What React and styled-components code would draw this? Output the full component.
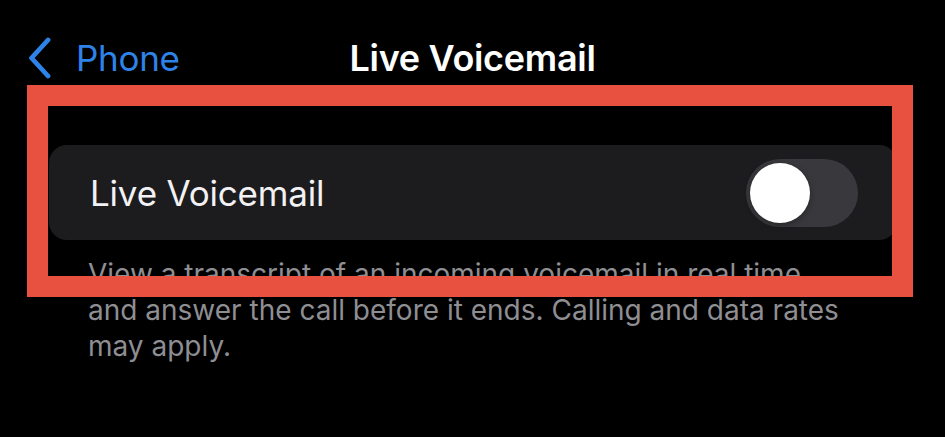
import React from "react";
import styled, { createGlobalStyle } from "styled-components";

const Global = createGlobalStyle`
  html, body { margin: 0; padding: 0; background: #000; }
  body { font-family: Inter, "Noto Sans", "Liberation Sans", sans-serif; -webkit-font-smoothing: antialiased; }
`;

const Screen = styled.div`
  position: relative;
  width: 945px;
  height: 437px;
  background: #000;
  overflow: hidden;
`;

const NavBar = styled.header`
  display: grid;
  grid-template-columns: 1fr auto 1fr;
  align-items: center;
  height: 116px;
  padding: 0 28px;
  box-sizing: border-box;
`;

const BackButton = styled.div`
  display: flex;
  align-items: center;
  gap: 24px;
  color: #2e83e8;
  font-size: 35px;
  font-weight: 400;
  letter-spacing: -0.3px;
`;

const Title = styled.h1`
  margin: 0;
  color: #fff;
  font-size: 36px;
  font-weight: 600;
  letter-spacing: -0.3px;
`;

const Card = styled.section`
  margin: 29px 48px 0 49px;
  height: 95px;
  border-radius: 18px;
  background: #1c1c1e;
  display: flex;
  align-items: center;
  justify-content: space-between;
  padding: 0 39px 0 41px;
`;

const Label = styled.span`
  color: #f2f2f4;
  font-size: 35px;
  font-weight: 400;
  letter-spacing: -0.2px;
`;

const Track = styled.div`
  width: 112px;
  height: 68px;
  border-radius: 34px;
  background: #39393d;
  display: flex;
  align-items: center;
  padding: 0 4px;
  box-sizing: border-box;
  justify-content: ${(p) => (p.$on ? "flex-end" : "flex-start")};
`;

const Knob = styled.div`
  width: 60px;
  height: 60px;
  border-radius: 50%;
  background: #fff;
  box-shadow: 0 2px 6px rgba(0, 0, 0, 0.35);
`;

const Footer = styled.p`
  margin: 16px 40px 0 88px;
  color: #8e8e93;
  font-size: 28px;
  line-height: 36px;
  letter-spacing: 0px;
  white-space: nowrap;
`;

const Highlight = styled.div`
  position: absolute;
  left: 27px;
  top: 85px;
  width: 886px;
  height: 212px;
  box-sizing: border-box;
  border: 21px solid #e8503f;
  pointer-events: none;
`;

function Chevron() {
  return (
    <svg width="24" height="42" viewBox="0 0 24 42" fill="none">
      <polyline
        points="20,3 3.5,21 20,39"
        stroke="#2e83e8"
        strokeWidth="4.8"
        strokeLinecap="round"
        strokeLinejoin="round"
      />
    </svg>
  );
}

export default function App() {
  return (
    <Screen>
      <Global />
      <NavBar>
        <BackButton>
          <Chevron />
          <span>Phone</span>
        </BackButton>
        <Title>Live Voicemail</Title>
        <div />
      </NavBar>
      <Card>
        <Label>Live Voicemail</Label>
        <Track $on={false}>
          <Knob />
        </Track>
      </Card>
      <Footer>
        View a transcript of an incoming voicemail in real time
        <br />
        and answer the call before it ends. Calling and data rates
        <br />
        may apply.
      </Footer>
      <Highlight />
    </Screen>
  );
}
